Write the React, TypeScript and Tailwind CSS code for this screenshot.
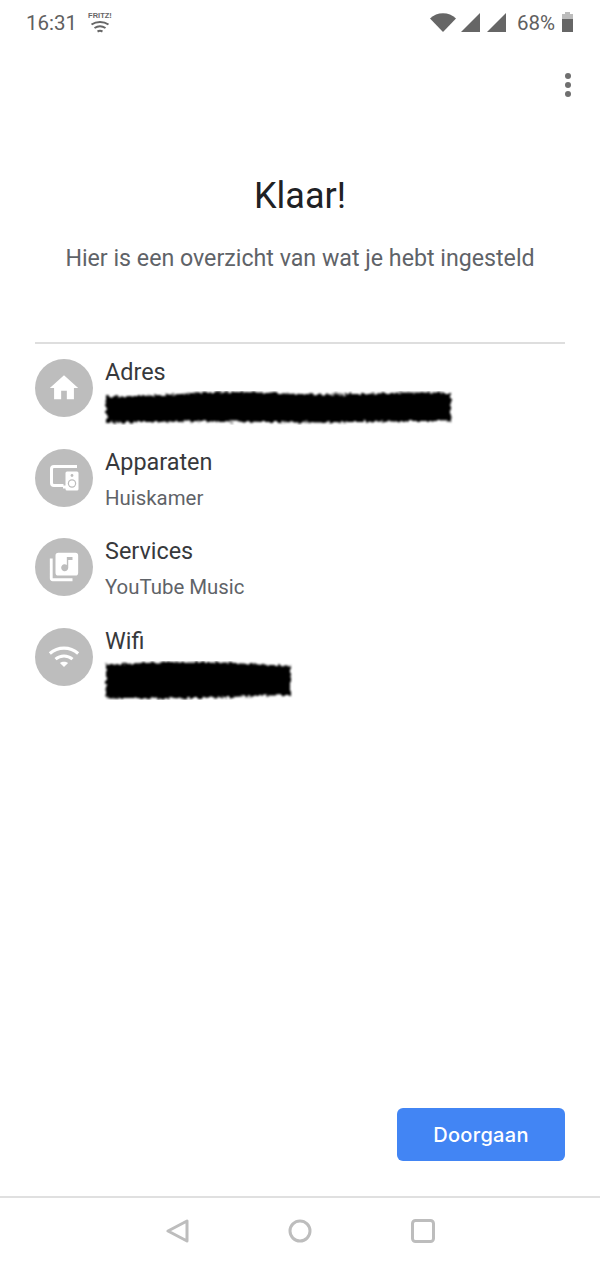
import React from "react";

const jag = (w: number, h: number, seed: number, amp: number) => {
  const top: string[] = [];
  const bottom: string[] = [];
  for (let x = 0; x <= w; x += 5) {
    const a = Math.sin(x * 0.031 + seed) * amp * 1.4 + Math.sin(x * 0.013 + seed * 2) * amp;
    const b = Math.sin(x * 0.023 + seed * 3) * amp * 1.4 + Math.sin(x * 0.017 + seed) * amp;
    top.push(`${x + 4},${(2 + amp + a).toFixed(1)}`);
    bottom.unshift(`${x + 4},${(h - 2 - amp + b).toFixed(1)}`);
  }
  return [...top, ...bottom].join(" ");
};

function Scribble({ w, h, seed }: { w: number; h: number; seed: number }) {
  const id = `scribble-${seed}`;
  return (
    <svg width={w + 8} height={h} viewBox={`0 0 ${w + 8} ${h}`} className="block">
      <defs>
        <filter id={id} x="-5%" y="-30%" width="110%" height="160%">
          <feTurbulence type="fractalNoise" baseFrequency="0.25" numOctaves="3" seed={seed} />
          <feDisplacementMap in="SourceGraphic" scale="5" />
          <feGaussianBlur stdDeviation="0.9" />
        </filter>
      </defs>
      <polygon points={jag(w, h, seed, 1)} fill="#000" filter={`url(#${id})`} />
    </svg>
  );
}

function HomeIcon() {
  return (
    <svg width="34" height="34" viewBox="0 0 24 24" fill="#fff">
      <path d="M10 20v-6h4v6h5v-8h3L12 3 2 12h3v8z" />
    </svg>
  );
}
function DevicesIcon() {
  return (
    <svg width="30" height="30" viewBox="0 0 30 30" fill="none">
      <path d="M28 3.500H5a2.500 2.500 0 0 0-2.500 2.500v14A2.500 2.500 0 0 0 5 22.500h9.500" stroke="#fff" strokeWidth="3" />
      <path d="M14 24h3" stroke="#fff" strokeWidth="3" />
      <rect x="16.500" y="8.500" width="13" height="19" rx="1.500" fill="#fff" />
      <circle cx="23" cy="12.500" r="1.400" fill="#bdbdbd" />
      <circle cx="23" cy="20.500" r="4.200" fill="#bdbdbd" />
      <circle cx="23" cy="20.500" r="3" fill="#fff" />
    </svg>
  );
}
function MusicIcon() {
  return (
    <svg width="34" height="34" viewBox="0 0 24 24" fill="#fff">
      <path d="M20 2H8a2 2 0 0 0-2 2v12a2 2 0 0 0 2 2h12a2 2 0 0 0 2-2V4a2 2 0 0 0-2-2zm-2 5h-3v5.500a2.500 2.500 0 1 1-1-2V5h4v2zM4 6H2v14a2 2 0 0 0 2 2h14v-2H4V6z" />
    </svg>
  );
}
function WifiIcon() {
  return (
    <svg width="34" height="34" viewBox="0 0 24 24" fill="none" stroke="#fff" strokeWidth="2.200">
      <path d="M2 9.500c5.800-5 14.200-5 20 0" />
      <path d="M6 13.500c3.500-3 8.500-3 12 0" />
      <path d="M12 19l-2.900-2.700c1.700-1.300 4.100-1.300 5.800 0z" fill="#fff" stroke="none" />
    </svg>
  );
}

function Row({ icon, title, sub, children }: { icon: React.ReactNode; title: string; sub?: string; children?: React.ReactNode }) {
  return (
    <div className="flex h-[89.500px] gap-3">
      <div className="flex h-[58px] w-[58px] shrink-0 items-center justify-center rounded-full bg-[#bdbdbd]">{icon}</div>
      <div className="flex flex-col">
        <div className="-mt-[2px] text-[23.400px] leading-[30px] text-[#37393c]">{title}</div>
        {sub ? <div className="mt-[8px] text-[20.400px] leading-[26px] text-[#5f6368]">{sub}</div> : children}
      </div>
    </div>
  );
}

export default function App() {
  return (
    <div className="flex h-[1266px] w-[600px] flex-col bg-white font-['Roboto',sans-serif]">
      {/* status bar */}
      <div className="flex h-[46px] items-start justify-between pl-[26px] pr-[27px] pt-[10px] text-[20.500px] leading-[26px] text-[#5f6060]">
        <div className="flex items-start gap-[11px]">
          <span>16:31</span>
          <div className="flex flex-col items-center pt-[1px]">
            <span className="font-['Liberation_Sans',sans-serif] text-[7.500px] font-bold leading-[9px] text-[#666]">FRITZ!</span>
            <svg width="20" height="13" viewBox="0 0 20 13" fill="none" stroke="#666" strokeWidth="2">
              <path d="M1.500 4.500c5-3.500 12-3.500 17 0" />
              <path d="M4.500 8c3.200-2 7.800-2 11 0" />
              <path d="M7.500 11.500c1.500-.8 3.500-.8 5 0" />
            </svg>
          </div>
        </div>
        <div className="flex items-start">
          <svg width="26" height="19" viewBox="0 0 26 19" className="mt-[3px]" fill="#666">
            <path d="M0 5.500C7-1.500 19-1.500 26 5.500L13 19z" />
          </svg>
          <svg width="19" height="19" viewBox="0 0 19 19" className="ml-[5px] mt-[3px]" fill="#666"><path d="M19 0v19H0z" /></svg>
          <svg width="19" height="19" viewBox="0 0 19 19" className="ml-[7px] mt-[3px]" fill="#666"><path d="M19 0v19H0z" /></svg>
          <span className="ml-[11px]">68%</span>
          <svg width="11" height="20" viewBox="0 0 11 20" className="ml-[7px] mt-[2px]">
            <path d="M3 0h5v2h3v7H0V2h3z" fill="#bcbcbc" />
            <rect y="7" width="11" height="13" fill="#666" />
          </svg>
        </div>
      </div>

      {/* overflow menu */}
      <div className="flex justify-end pr-[29px] pt-[27px]">
        <div className="flex flex-col gap-[3px]">
          <span className="h-[6px] w-[6px] rounded-full bg-[#6f6f6f]" />
          <span className="h-[6px] w-[6px] rounded-full bg-[#6f6f6f]" />
          <span className="h-[6px] w-[6px] rounded-full bg-[#6f6f6f]" />
        </div>
      </div>

      <h1 className="mt-[74px] text-center text-[36px] leading-[50px] text-[#202124]">Klaar!</h1>
      <p className="mt-[22px] text-center text-[23.200px] leading-[30px] text-[#5f6368]">Hier is een overzicht van wat je hebt ingesteld</p>

      <div className="mx-[35px] mt-[69px] border-t-2 border-[#dedede] pt-[15px]">
        <Row icon={<HomeIcon />} title="Adres">
          <div className="-ml-[3px] mt-[4px]"><Scribble w={347} h={34} seed={1} /></div>
        </Row>
        <Row icon={<DevicesIcon />} title="Apparaten" sub="Huiskamer" />
        <Row icon={<MusicIcon />} title="Services" sub="YouTube Music" />
        <Row icon={<WifiIcon />} title="Wifi">
          <div className="-ml-[3px] mt-[5px]"><Scribble w={185} h={39} seed={2} /></div>
        </Row>
      </div>

      <div className="flex-1" />

      <div className="flex justify-end pr-[35px]">
        <button className="h-[53px] w-[168px] rounded-[6px] bg-[#4285f4] pt-[1px] font-['Inter',sans-serif] text-[20px] font-medium tracking-[0.3px] text-white">Doorgaan</button>
      </div>

      <div className="mt-[35px] flex h-[70px] items-start justify-center gap-[99px] border-t-2 border-[#e0e0e0] pt-[21px]">
        <svg width="24" height="24" viewBox="0 0 24 24" fill="none" stroke="#bdbdbd" strokeWidth="3" strokeLinejoin="round">
          <path d="M22 2v20L3 12z" />
        </svg>
        <svg width="24" height="24" viewBox="0 0 24 24" fill="none" stroke="#bdbdbd" strokeWidth="3">
          <circle cx="12" cy="12" r="10" />
        </svg>
        <svg width="24" height="24" viewBox="0 0 24 24" fill="none" stroke="#bdbdbd" strokeWidth="3">
          <rect x="1.500" y="1.500" width="21" height="21" rx="3" />
        </svg>
      </div>
    </div>
  );
}
